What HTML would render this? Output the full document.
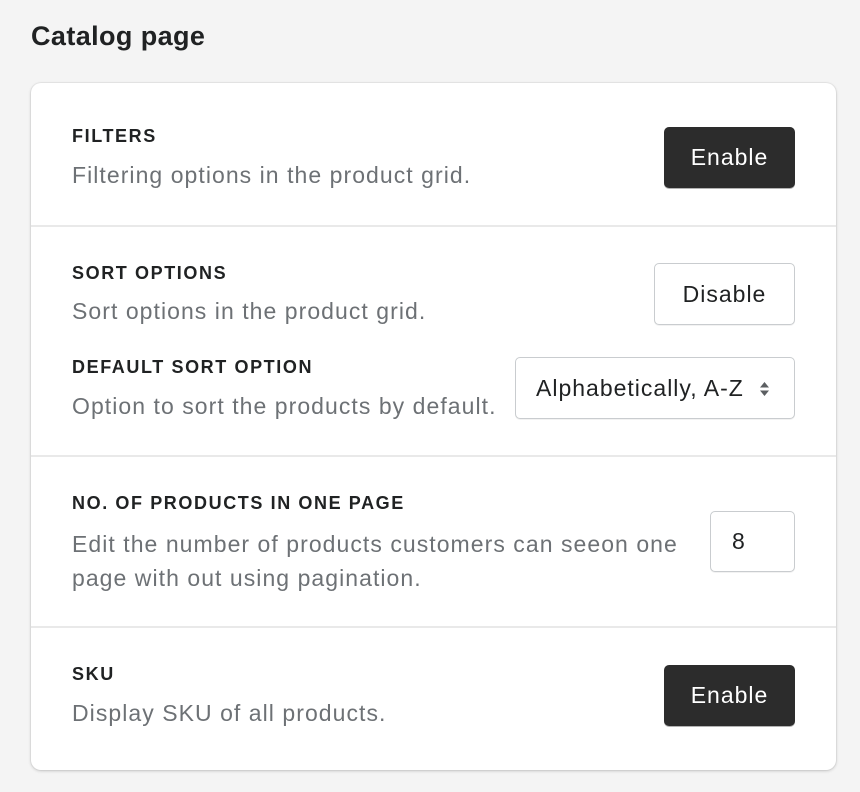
<!DOCTYPE html>
<html><head><style>
*{margin:0;padding:0;box-sizing:border-box}
body{width:860px;height:792px;background:#f4f4f4;font-family:"Liberation Sans",sans-serif;position:relative;overflow:hidden}
.a{position:absolute;white-space:nowrap}
h1{position:absolute;left:31px;top:21px;font-size:27px;letter-spacing:.4px;font-weight:bold;color:#202223}
.card{position:absolute;left:31px;top:83px;width:805px;height:687px;background:#fff;border-radius:10px;box-shadow:0 0 0 1px rgba(0,0,0,.04),0 1px 3px rgba(0,0,0,.18)}
.hr{position:absolute;left:31px;width:805px;height:2px;background:#e9e9e9}
.t{font-size:18px;font-weight:bold;letter-spacing:1.6px;color:#202223}
.s{font-size:23px;color:#6d7175;letter-spacing:1.05px}
.btn{position:absolute;border-radius:5px;font-size:23px;letter-spacing:1px;display:flex;align-items:center;justify-content:center}
.dark{background:#2c2c2c;color:#fff;box-shadow:0 1px 0 rgba(0,0,0,.3)}
.light{background:#fff;color:#202223;border:1px solid #c9cccf;box-shadow:0 1px 0 rgba(0,0,0,.05)}
</style></head><body>
<h1>Catalog page</h1>
<div class="card"></div>
<div class="hr" style="top:225px"></div>
<div class="hr" style="top:455px"></div>
<div class="hr" style="top:626px"></div>

<div class="a t" style="left:72px;top:126px">FILTERS</div>
<div class="a s" style="left:72px;top:162px">Filtering options in the product grid.</div>
<div class="btn dark" style="left:664px;top:127px;width:131px;height:61px">Enable</div>

<div class="a t" style="left:72px;top:263px">SORT OPTIONS</div>
<div class="a s" style="left:72px;top:298px">Sort options in the product grid.</div>
<div class="btn light" style="left:654px;top:263px;width:141px;height:62px">Disable</div>

<div class="a t" style="left:72px;top:357px">DEFAULT SORT OPTION</div>
<div class="a s" style="left:72px;top:393px">Option to sort the products by default.</div>
<div class="btn light" style="left:515px;top:357px;width:280px;height:62px;justify-content:flex-start;padding-left:20px">Alphabetically, A-Z
<svg style="position:absolute;left:243px;top:23px" width="11" height="16" viewBox="0 0 11 16"><path d="M5.5 1L10 6.5H1z M5.5 15L10 9.5H1z" fill="#5c5f62"/></svg></div>

<div class="a t" style="left:72px;top:493px">NO. OF PRODUCTS IN ONE PAGE</div>
<div class="a s" style="left:72px;top:527px;line-height:34px">Edit the number of products customers can seeon one<br>page with out using pagination.</div>
<div class="btn light" style="left:710px;top:511px;width:85px;height:61px;justify-content:flex-start;padding-left:21px">8</div>

<div class="a t" style="left:72px;top:664px">SKU</div>
<div class="a s" style="left:72px;top:700px">Display SKU of all products.</div>
<div class="btn dark" style="left:664px;top:665px;width:131px;height:61px">Enable</div>
</body></html>
